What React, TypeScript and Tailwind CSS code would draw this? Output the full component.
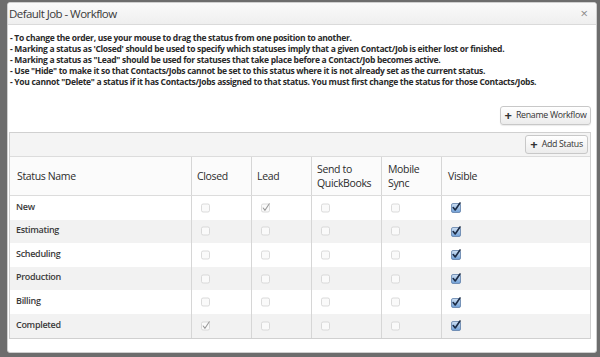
import React from "react";

const font = { fontFamily: "'Open Sans', 'Liberation Sans', sans-serif" };

function Box({ kind }: { kind: "off" | "grey" | "blue" }) {
  if (kind === "blue") {
    return (
      <svg width="10" height="11" viewBox="0 0 10 11" className="block">
        <defs>
          <linearGradient id="bg" x1="0" y1="0" x2="0" y2="1">
            <stop offset="0" stopColor="#cfe0f3" />
            <stop offset="1" stopColor="#6f9fd6" />
          </linearGradient>
        </defs>
        <rect x="0.5" y="1.5" width="9" height="9" rx="1.5" fill="url(#bg)" stroke="#5f7fa8" strokeWidth="0.8" />
        <path d="M2.2 5.6 L4.2 8 L9 1" fill="none" stroke="#1b2b45" strokeWidth="1.6" strokeLinecap="round" strokeLinejoin="round" />
      </svg>
    );
  }
  return (
    <svg width="10" height="10" viewBox="0 0 10 10" className="block">
      <rect x="0.5" y="1" width="8" height="8" rx="1.6" fill="#fafafa" stroke="#d2d2d2" strokeWidth="0.8" />
      {kind === "grey" && (
        <path d="M2.2 5 L4 7.3 L8.3 0.8" fill="none" stroke="#9a9a9a" strokeWidth="1.1" strokeLinecap="round" strokeLinejoin="round" />
      )}
    </svg>
  );
}

const rows: { name: string; closed: boolean; lead: boolean }[] = [
  { name: "New", closed: false, lead: true },
  { name: "Estimating", closed: false, lead: false },
  { name: "Scheduling", closed: false, lead: false },
  { name: "Production", closed: false, lead: false },
  { name: "Billing", closed: false, lead: false },
  { name: "Completed", closed: true, lead: false },
];

const cols = "grid grid-cols-[181px_60px_60px_70px_60px_1fr]";

export default function App() {
  return (
    <div className="w-[600px] h-[357px] bg-[#6d6d6d] pt-[2px] pl-[7px] overflow-hidden" style={font}>
      <div className="w-[590px] h-[351px] bg-white border border-[#cfcfcf] rounded-[3px] flex flex-col overflow-hidden">
        <div className="h-[22px] shrink-0 bg-gradient-to-b from-[#fafafa] to-[#efefef] border-b border-[#dadada] flex items-center justify-between pl-[1px] pr-[8px]">
          <span className="text-[11.5px] text-[#3a3a3a] leading-none tracking-[-0.55px]">Default Job - Workflow</span>
          <span className="text-[13px] text-[#8a8a8a] leading-none">×</span>
        </div>
        <div className="pl-[2px] pr-[6px] pt-[7px] text-[8.5px] font-bold text-[#2a2a2a] leading-[11px] tracking-[-0.3px]">
          <div>- To change the order, use your mouse to drag the status from one position to another.</div>
          <div>- Marking a status as 'Closed' should be used to specify which statuses imply that a given Contact/Job is either lost or finished.</div>
          <div>- Marking a status as "Lead" should be used for statuses that take place before a Contact/Job becomes active.</div>
          <div>- Use "Hide" to make it so that Contacts/Jobs cannot be set to this status where it is not already set as the current status.</div>
          <div>- You cannot "Delete" a status if it has Contacts/Jobs assigned to that status. You must first change the status for those Contacts/Jobs.</div>
        </div>
        <div className="flex justify-end pr-[5px] mt-[19px]">
          <button className="h-[19px] w-[91px] whitespace-nowrap border border-[#c8c8c8] rounded-[3px] bg-gradient-to-b from-white to-[#ececec] flex items-center justify-center gap-[4px] text-[8.8px] text-[#333] shadow-[0_1px_1px_rgba(0,0,0,0.08)]">
            <span className="text-[13px] leading-none font-bold text-[#333] -mt-[1px]">+</span>
            <span className="tracking-[-0.3px]">Rename Workflow</span>
          </button>
        </div>
        <div className="ml-[1px] mr-[5px] mt-[7px] border border-[#d0d0d0] flex flex-col">
          <div className="h-[24px] bg-[#f4f4f4] border-b border-[#dcdcdc] flex items-center justify-end pr-[2px]">
            <button className="h-[19px] w-[63px] whitespace-nowrap border border-[#c8c8c8] rounded-[3px] bg-gradient-to-b from-white to-[#ececec] flex items-center justify-center gap-[4px] text-[8.8px] text-[#333]">
              <span className="text-[13px] leading-none font-bold -mt-[1px]">+</span>
              <span className="tracking-[-0.3px]">Add Status</span>
            </button>
          </div>
          <div className={`${cols} h-[39px] bg-[#fbfbfb] border-b border-[#dcdcdc] text-[10.5px] text-[#2b2b2b] leading-[14px] tracking-[-0.35px]`}>
            <div className="flex items-center pl-[7px]">Status Name</div>
            <div className="flex items-center pl-[5px] border-l border-[#d6d6d6]">Closed</div>
            <div className="flex items-center pl-[5px] border-l border-[#d6d6d6]">Lead</div>
            <div className="flex items-center pl-[5px] border-l border-[#d6d6d6]">Send to<br />QuickBooks</div>
            <div className="flex items-center pl-[6px] border-l border-[#d6d6d6]">Mobile<br />Sync</div>
            <div className="flex items-center pl-[6px] border-l border-[#d6d6d6]">Visible</div>
          </div>
          {rows.map((r, i) => (
            <div key={r.name} className={`${cols} h-[23.6px] ${i % 2 === 1 ? "bg-[#f2f2f2]" : "bg-white"} text-[9px] font-semibold text-[#3a3a3a] tracking-[-0.3px]`}>
              <div className="flex items-center pl-[6px] pb-[3px]">{r.name}</div>
              <div className="flex items-center pl-[9px] border-l border-[#d6d6d6]"><Box kind={r.closed ? "grey" : "off"} /></div>
              <div className="flex items-center pl-[9px] border-l border-[#d6d6d6]"><Box kind={r.lead ? "grey" : "off"} /></div>
              <div className="flex items-center pl-[9px] border-l border-[#d6d6d6]"><Box kind="off" /></div>
              <div className="flex items-center pl-[9px] border-l border-[#d6d6d6]"><Box kind="off" /></div>
              <div className="flex items-center pl-[9px] border-l border-[#d6d6d6]"><Box kind="blue" /></div>
            </div>
          ))}
        </div>
      </div>
    </div>
  );
}
